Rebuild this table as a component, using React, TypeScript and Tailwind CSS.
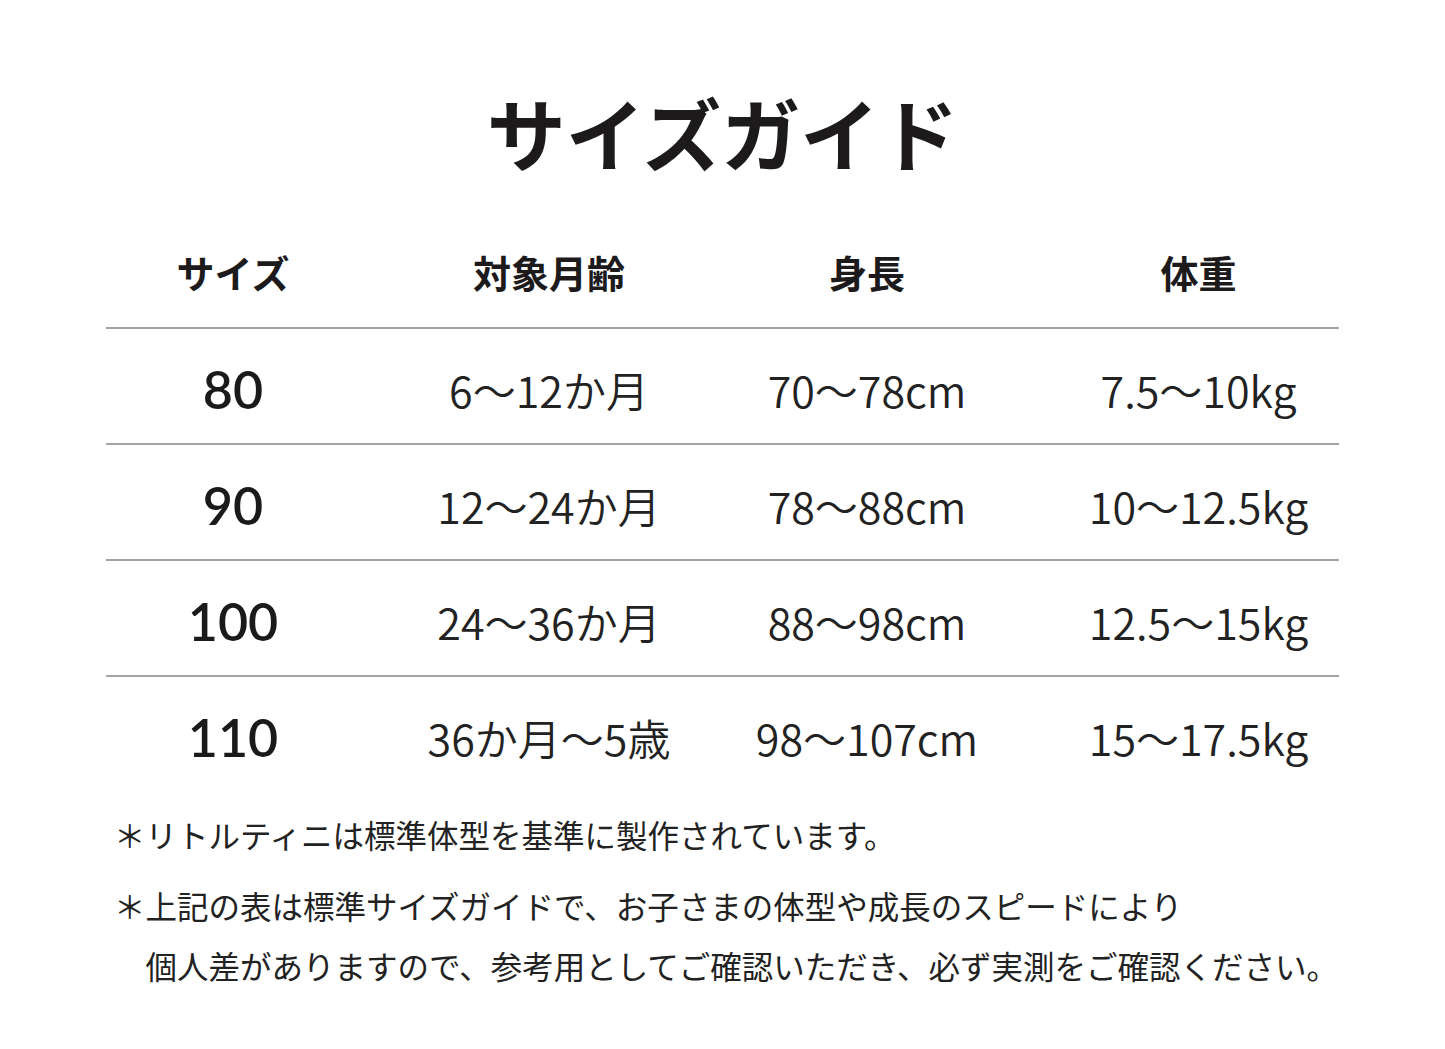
import React from 'react'

const jp = { fontFamily: '"Noto Sans CJK JP", "Noto Sans", sans-serif' }
const num = { fontFamily: 'Lato, "Noto Sans CJK JP", sans-serif' }

const rows = [
  { size: '80', age: '6〜12か月', height: '70〜78cm', weight: '7.5〜10kg' },
  { size: '90', age: '12〜24か月', height: '78〜88cm', weight: '10〜12.5kg' },
  { size: '100', age: '24〜36か月', height: '88〜98cm', weight: '12.5〜15kg' },
  { size: '110', age: '36か月〜5歳', height: '98〜107cm', weight: '15〜17.5kg' },
]

// column centers: 127 / 443 / 761 / 1092 from table left
const cols = 'grid grid-cols-[254px_378px_258px_1fr] items-center'

export default function App() {
  return (
    <main className="bg-white min-h-[1049px] w-full text-[#1c1a1b]" style={jp}>
      <div className="h-[216px] flex items-center justify-center pt-[46px]">
        <h1 className="text-[79px] font-bold leading-none">サイズガイド</h1>
      </div>

      <div className="w-[1233px] mx-auto">
        <div className={`${cols} h-[111px] text-[38px] font-bold`}>
          <div className="text-center">サイズ</div>
          <div className="text-center">対象月齢</div>
          <div className="text-center">身長</div>
          <div className="text-center pl-[62px]">体重</div>
        </div>
        <div className="h-[2px] bg-[#a3a3a3]" />

        {rows.map((r, i) => (
          <div key={r.size}>
            {i > 0 && <div className="h-[2px] bg-[#a3a3a3]" />}
            <div className={`${cols} h-[114px] text-[43px] font-[350] leading-none pt-[6px] text-[#222]`}>
              <div className="text-center text-[52px] font-semibold text-[#1a1a1a]" style={num}>
                {r.size}
              </div>
              <div className="text-center">{r.age}</div>
              <div className="text-center">{r.height}</div>
              <div className="text-center pl-[62px]">{r.weight}</div>
            </div>
          </div>
        ))}

        <div className="mt-[13px] pl-[8px] text-[31.5px] text-[#222] leading-[60px]">
          <p>＊リトルティニは標準体型を基準に製作されています。</p>
          <p className="mt-[11px]">＊上記の表は標準サイズガイドで、お子さまの体型や成長のスピードにより</p>
          <p className="pl-[31.5px]">個人差がありますので、参考用としてご確認いただき、必ず実測をご確認ください。</p>
        </div>
      </div>
    </main>
  )
}
